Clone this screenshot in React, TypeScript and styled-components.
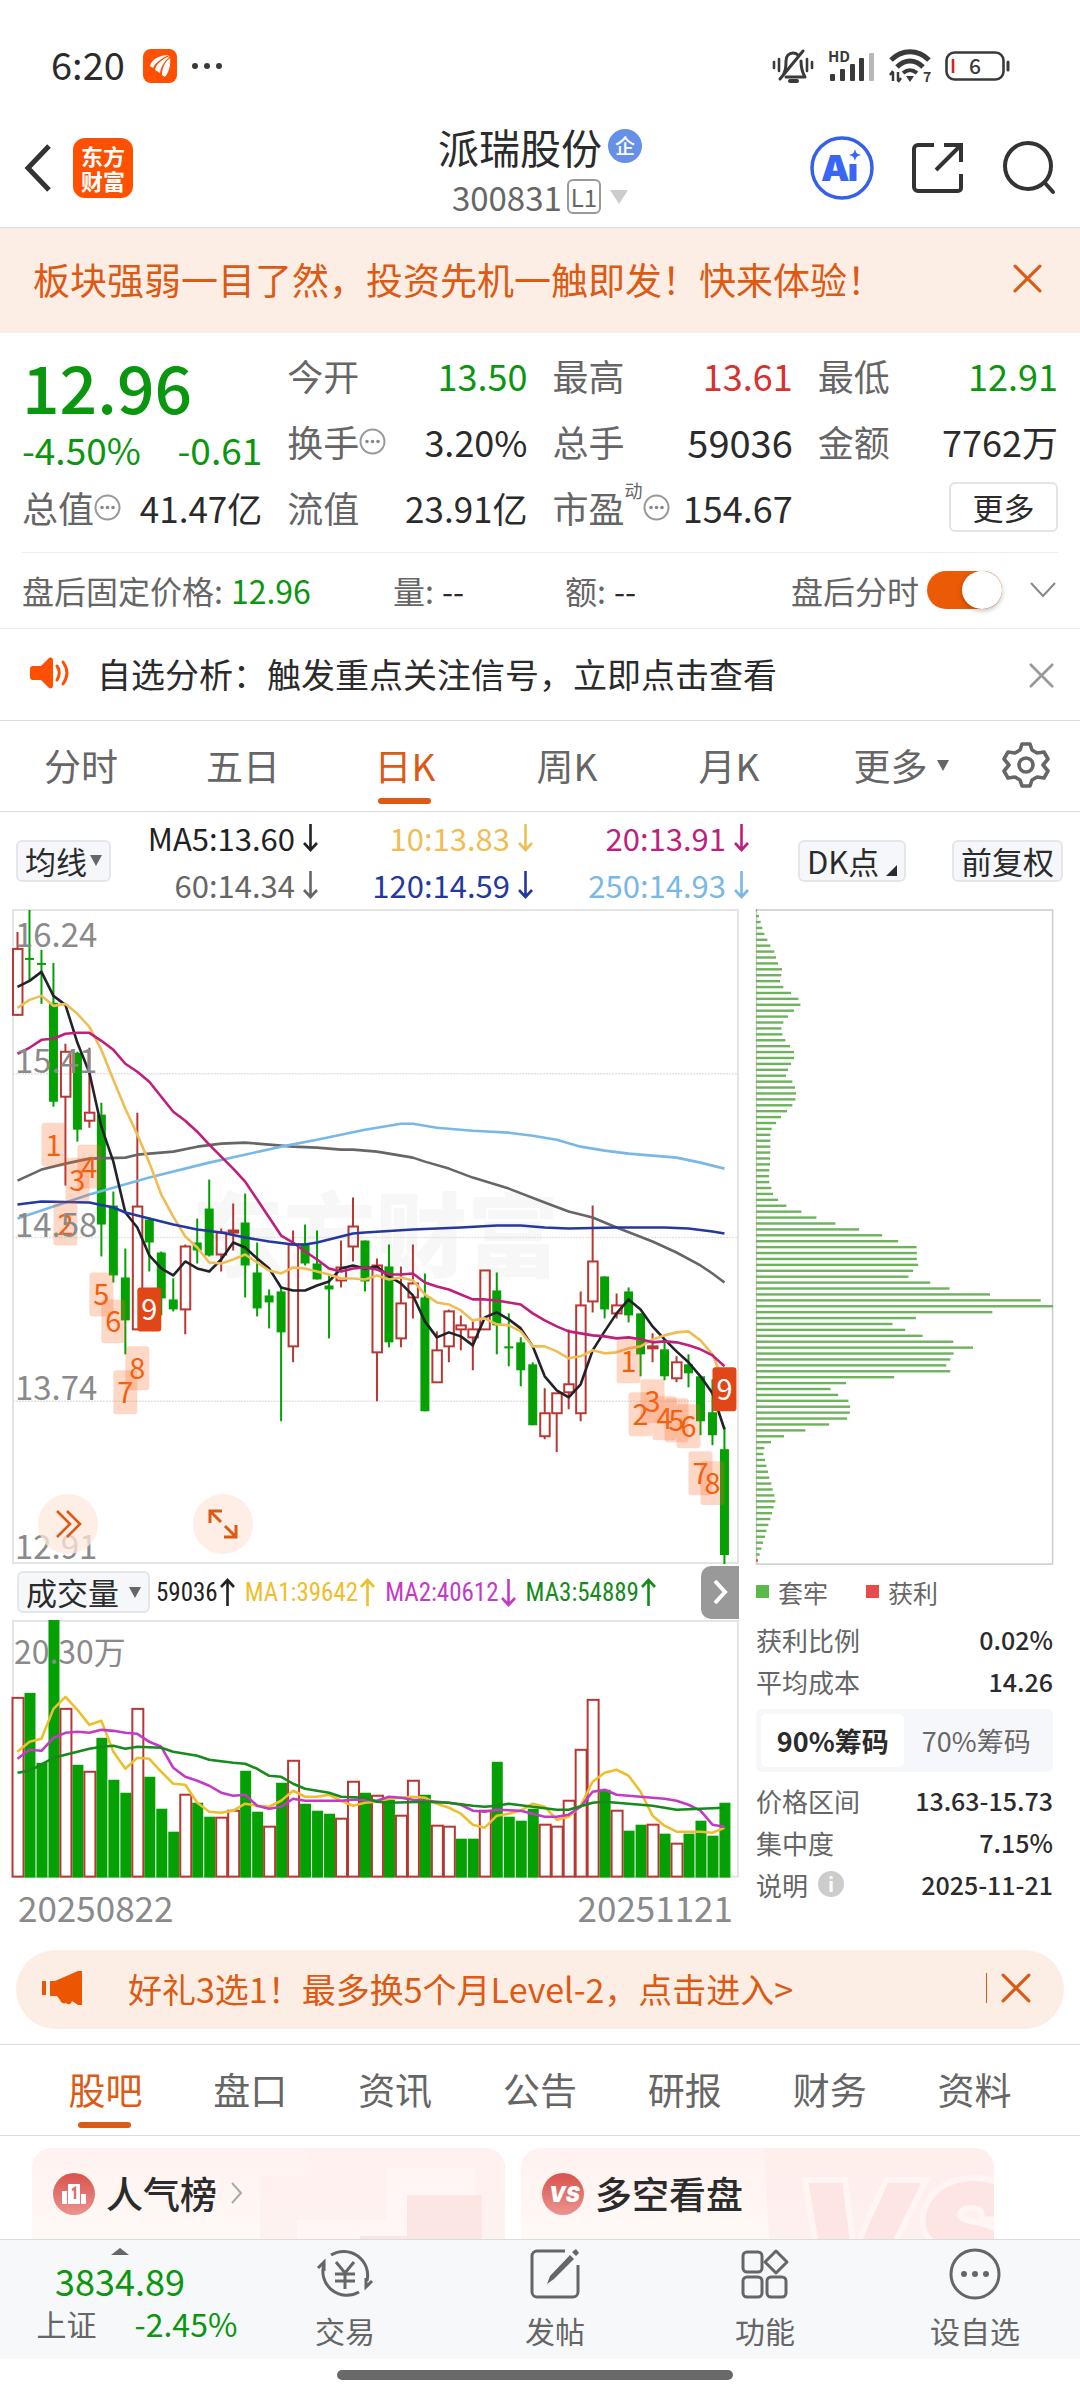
import React from "react";
import styled, { createGlobalStyle, css } from "styled-components";

/* ---------- theme ---------- */

const color = {
  text: "#2b2b2b",
  muted: "#666666",
  faint: "#8a8a8a",
  line: "#dcdcdc",
  softLine: "#ececec",
  orange: "#dc5a14",
  brand: "#ff4f00",
  green: "#0b960f",
  red: "#d8312f",
  candleUp: "#b93733",
  candleDown: "#04a004",
  peach: "#fdeee5",
  panel: "#f6f7fa",
};

const GlobalStyle = createGlobalStyle`
  * { box-sizing: border-box; }
  body {
    margin: 0;
    background: #fff;
    color: ${color.text};
    font-family: "Noto Sans CJK SC", "Noto Sans", sans-serif;
  }
  button {
    font: inherit;
    color: inherit;
    background: none;
    border: 0;
    margin: 0;
    padding: 0;
    cursor: pointer;
  }
  a { color: inherit; text-decoration: none; }
  svg { display: block; flex: none; overflow: visible; }
`;

/* ---------- page shell ---------- */

const Page = styled.div`
  display: flex;
  flex-direction: column;
  height: 100vh;
  overflow: hidden;
`;

const Main = styled.main`
  flex: 1;
  min-height: 0;
  overflow: hidden;
`;

/* ---------- status bar ---------- */

const StatusBar = styled.div`
  display: flex;
  align-items: center;
  justify-content: space-between;
  height: 88px;
  padding: 44px 70px 0 51px;
`;

const StatusGroup = styled.div`
  display: flex;
  align-items: center;
  gap: 14px;
`;

const Clock = styled.span`
  font-size: 38px;
  line-height: 40px;
  margin-right: 4px;
  padding-bottom: 4px;
`;

/* ---------- title bar ---------- */

const TitleBar = styled.header`
  display: grid;
  grid-template-columns: 1fr auto 1fr;
  align-items: center;
  height: 140px;
  padding: 20px 24px 0;
  border-bottom: 1px solid ${color.line};
`;

const TitleSide = styled.div<{ $end?: boolean }>`
  display: flex;
  align-items: center;
  gap: ${(p) => (p.$end ? 38 : 22)}px;
  justify-content: ${(p) => (p.$end ? "flex-end" : "flex-start")};
`;

const AppLogo = styled.span`
  display: grid;
  place-content: center;
  width: 60px;
  height: 60px;
  border-radius: 12px;
  background: ${color.brand};
  color: #fff;
  font-size: 22px;
  line-height: 25px;
  font-weight: 700;
`;

const TitleText = styled.div`
  display: flex;
  flex-direction: column;
  align-items: center;
  padding-top: 4px;
`;

const StockName = styled.h1`
  display: flex;
  align-items: center;
  gap: 6px;
  margin: 0;
  font-size: 41px;
  line-height: 54px;
  font-weight: 400;
`;

const CompanyBadge = styled.span`
  display: grid;
  place-content: center;
  width: 34px;
  height: 34px;
  border-radius: 50%;
  background: #6690e8;
  color: #fff;
  font-size: 20px;
  line-height: 24px;
  font-weight: 500;
`;

const StockCode = styled.button`
  display: flex;
  align-items: center;
  gap: 5px;
  font-size: 33px;
  line-height: 48px;
  color: ${color.muted};
`;

const LevelTag = styled.span`
  margin-right: 4px;
  border: 2px solid #999;
  border-radius: 6px;
  padding: 0 2px;
  font-size: 24px;
  line-height: 31px;
`;

const Caret = styled.span<{ $size?: number; $color?: string }>`
  width: 0;
  height: 0;
  border: ${(p) => p.$size ?? 6}px solid transparent;
  border-bottom-width: 0;
  border-top: ${(p) => (p.$size ?? 6) + 5}px solid ${(p) => p.$color ?? color.muted};
`;

/* ---------- banner and quote ---------- */

const Banner = styled.div`
  display: flex;
  align-items: center;
  justify-content: space-between;
  height: 105px;
  padding: 0 38px 4px 33px;
  background: ${color.peach};
  color: ${color.orange};
  font-size: 37px;
`;

const QuotePanel = styled.section`
  display: grid;
  grid-template-columns: repeat(4, minmax(0, 1fr));
  grid-auto-rows: 66px;
  column-gap: 25px;
  margin: 0 22px;
  padding: 9px 0 12px;
  border-bottom: 1px solid ${color.softLine};
`;

const PriceBlock = styled.div`
  grid-row: span 2;
  padding-top: 3px;
  color: ${color.green};
`;

const LastPrice = styled.div`
  font-size: 66px;
  line-height: 80px;
  font-weight: 500;
`;

const Changes = styled.div`
  display: flex;
  justify-content: space-between;
  font-size: 37px;
  line-height: 49px;
`;

const Metric = styled.div`
  display: flex;
  align-items: center;
  justify-content: space-between;
  white-space: nowrap;
`;

const MetricLabel = styled.span`
  display: flex;
  align-items: center;
  font-size: 36px;
  color: ${color.muted};
`;

const MetricValue = styled.span<{ $tone?: "up" | "down"; $size?: number }>`
  font-size: ${(p) => p.$size ?? 36}px;
  color: ${(p) => (p.$tone === "up" ? color.red : p.$tone === "down" ? color.green : color.text)};
`;

const SmallSup = styled.sup`
  align-self: flex-start;
  font-size: 18px;
  line-height: 18px;
`;

const MoreButton = styled.button`
  justify-self: end;
  align-self: center;
  width: 109px;
  height: 50px;
  border: 2px solid #e4e4e4;
  border-radius: 6px;
  font-size: 31px;
  line-height: 44px;
`;

const AfterHours = styled.section`
  display: flex;
  align-items: center;
  height: 76px;
  padding: 0 24px 2px 22px;
  border-bottom: 1px solid ${color.softLine};
  font-size: 32px;
  color: ${color.muted};
`;

const AfterItem = styled.span<{ $width: number }>`
  flex: 0 1 ${(p) => p.$width}px;
  white-space: nowrap;
`;

const AfterValue = styled.b<{ $green?: boolean }>`
  margin-left: 8px;
  font-weight: 400;
  color: ${(p) => (p.$green ? color.green : color.text)};
`;

const SwitchLabel = styled.label`
  display: flex;
  align-items: center;
  gap: 8px;
  margin-left: auto;
`;

const Switch = styled.input`
  appearance: none;
  display: flex;
  align-items: center;
  justify-content: flex-end;
  width: 75px;
  height: 38px;
  margin: 0 28px 0 0;
  border-radius: 19px;
  background: #eb5a05;
  &::before {
    content: "";
    width: 40px;
    height: 38px;
    border-radius: 50%;
    background: #fff;
    box-shadow: 0 2px 5px rgba(0, 0, 0, 0.25);
  }
`;

const Notice = styled.section`
  display: flex;
  align-items: center;
  gap: 28px;
  height: 92px;
  padding: 0 26px 3px 29px;
  border-bottom: 1px solid ${color.line};
  font-size: 34px;
`;

const Push = styled.span`
  margin-left: auto;
`;

/* ---------- tabs ---------- */

const Tabs = styled.nav<{ $columns: string; $inset: number }>`
  display: grid;
  grid-template-columns: ${(p) => p.$columns};
  height: 91px;
  padding: 0 ${(p) => p.$inset}px;
  border-bottom: 1px solid ${color.line};
`;

const Tab = styled.button<{ $active?: boolean }>`
  position: relative;
  display: flex;
  align-items: center;
  justify-content: center;
  gap: 9px;
  padding-bottom: 2px;
  font-size: 37px;
  color: ${(p) => (p.$active ? color.orange : color.muted)};
  ${(p) =>
    p.$active &&
    css`
      &::after {
        content: "";
        position: absolute;
        left: calc(50% - 27px);
        bottom: 7px;
        width: 53px;
        height: 6px;
        border-radius: 3px;
        background: ${color.orange};
      }
    `}
`;

/* ---------- indicators ---------- */

const IndicatorBar = styled.section`
  display: flex;
  align-items: center;
  height: 97px;
  padding: 0 17px 0 16px;
`;

const Chip = styled.button<{ $gap?: number }>`
  position: relative;
  display: flex;
  align-items: center;
  gap: ${(p) => p.$gap ?? 3}px;
  height: 42px;
  padding: 0 7px;
  border: 2px solid #e4e6ea;
  border-radius: 6px;
  background: ${color.panel};
  font-size: 31px;
  line-height: 36px;
  white-space: nowrap;
`;

const Corner = styled.i`
  align-self: flex-end;
  margin: 0 0 4px 4px;
  border-left: 11px solid transparent;
  border-bottom: 11px solid ${color.text};
`;

const Averages = styled.div`
  flex: 1;
  display: grid;
  grid-template-columns: 207fr 215fr 216fr;
  max-width: 638px;
`;

const Average = styled.span<{ $color: string }>`
  display: flex;
  align-items: center;
  justify-content: flex-end;
  gap: 8px;
  font-size: 31px;
  line-height: 47px;
  color: ${(p) => p.$color};
`;

const ChipGroup = styled.div`
  display: flex;
  justify-content: space-between;
  gap: 20px;
  flex: 0 0 265px;
  margin-left: auto;
`;

/* ---------- charts ---------- */

const ChartArea = styled.section`
  display: grid;
  grid-template-columns: minmax(0, 13fr) minmax(0, 6fr);
`;

const ChartColumn = styled.div`
  padding-left: 12px;
`;

const Stage = styled.div`
  position: relative;
`;

const Plot = styled.svg`
  width: 100%;
  height: auto;
`;

const FloatButton = styled.button<{ $left: string }>`
  position: absolute;
  left: ${(p) => p.$left};
  bottom: 10px;
  display: grid;
  place-content: center;
  width: 60px;
  height: 60px;
  border-radius: 50%;
  background: rgba(253, 232, 220, 0.75);
`;

const VolumeHead = styled.div`
  display: flex;
  align-items: center;
  gap: 6px;
  height: 56px;
  padding-left: 5px;
`;

const VolumeFigures = styled.div`
  display: flex;
  gap: 10px;
  font-family: "Liberation Sans Narrow", "Roboto Condensed", "Noto Sans CJK SC", sans-serif;
  font-size: 25px;
`;

const Figure = styled.span<{ $color: string }>`
  display: flex;
  align-items: center;
  gap: 2px;
  color: ${(p) => p.$color};
`;

const SideToggle = styled.button`
  display: grid;
  place-content: center;
  width: 38px;
  height: 53px;
  margin-left: auto;
  border-radius: 10px 0 0 10px;
  background: #999;
`;

const Dates = styled.div`
  display: flex;
  justify-content: space-between;
  padding: 0 6px;
  font-size: 35px;
  line-height: 58px;
  color: ${color.faint};
`;

const ChipColumn = styled.div`
  padding: 0 27px 0 17px;
`;

const Legend = styled.div`
  display: flex;
  gap: 38px;
  height: 53px;
  align-items: center;
  color: ${color.muted};
  font-size: 25px;
`;

const LegendItem = styled.span<{ $color: string }>`
  display: flex;
  align-items: center;
  gap: 9px;
  &::before {
    content: "";
    width: 13px;
    height: 13px;
    background: ${(p) => p.$color};
  }
`;

const ChipRow = styled.div`
  display: flex;
  align-items: center;
  justify-content: space-between;
  height: 42px;
  font-size: 26px;
  color: ${color.muted};
`;

const ChipLabel = styled.span`
  display: flex;
  align-items: center;
  gap: 10px;
`;

const ChipValue = styled.b`
  font-size: 25px;
  font-weight: 500;
  color: ${color.text};
`;

const InfoDot = styled.span`
  display: grid;
  place-content: center;
  width: 26px;
  height: 26px;
  border-radius: 50%;
  background: #ccc;
  color: #fff;
  font-size: 20px;
  line-height: 24px;
  font-weight: 700;
`;

const Segmented = styled.div`
  display: grid;
  grid-template-columns: 1fr 1fr;
  height: 63px;
  margin: 7px 0;
  padding: 5px;
  border-radius: 6px;
  background: ${color.panel};
`;

const Segment = styled.button<{ $active?: boolean }>`
  border-radius: 5px;
  font-size: 27px;
  white-space: nowrap;
  background: ${(p) => (p.$active ? "#fff" : "transparent")};
  color: ${(p) => (p.$active ? color.text : color.muted)};
  font-weight: ${(p) => (p.$active ? 700 : 400)};
`;

/* ---------- promo ---------- */

const Promo = styled.aside`
  display: flex;
  align-items: center;
  height: 79px;
  margin: 14px 16px 15px;
  padding: 0 33px 2px 26px;
  border-radius: 40px;
  background: ${color.peach};
  color: ${color.orange};
  font-size: 34px;
`;

const PromoLink = styled.a`
  margin-left: 46px;
`;

const PromoClose = styled.button`
  margin-left: auto;
  padding-left: 14px;
  border-left: 1px solid ${color.orange};
`;

const Rule = styled.hr`
  margin: 0;
  border: 0;
  border-top: 1px solid ${color.line};
`;

/* ---------- cards ---------- */

const Cards = styled.section`
  display: grid;
  grid-template-columns: 1fr 1fr;
  gap: 16px;
  padding: 12px 86px 0 32px;
`;

const Card = styled.a`
  position: relative;
  display: flex;
  align-items: flex-start;
  gap: 11px;
  height: 220px;
  padding: 25px 21px;
  border-radius: 20px;
  overflow: hidden;
  background: linear-gradient(#fff2f0, #fffaf7 100px);
  font-size: 37px;
  line-height: 40px;
  font-weight: 500;
`;

const CardArt = styled.svg`
  position: absolute;
  top: 0;
  right: 0;
`;

const CardTitle = styled.span`
  display: flex;
  align-items: center;
  gap: 14px;
`;

/* ---------- bottom navigation ---------- */

const BottomBar = styled.footer`
  position: relative;
  display: grid;
  grid-template-columns: 8fr 7fr 7fr 7fr 7fr;
  height: 120px;
  border-top: 1px solid ${color.line};
  background: #f6f8fa;
`;

const IndexButton = styled.button`
  display: flex;
  flex-direction: column;
  align-items: center;
  padding-top: 8px;
  color: ${color.green};
`;

const UpCaret = styled.i`
  border: 9px solid transparent;
  border-top: 0;
  border-bottom: 7px solid ${color.muted};
`;

const IndexPrice = styled.span`
  font-size: 36px;
  line-height: 50px;
`;

const IndexRow = styled.span`
  display: flex;
  align-items: center;
  gap: 38px;
  padding-left: 34px;
  font-size: 32px;
  line-height: 36px;
`;

const IndexName = styled.span`
  color: ${color.muted};
  font-size: 30px;
`;

const NavButton = styled.button`
  display: flex;
  flex-direction: column;
  align-items: center;
  gap: 8px;
  padding-top: 8px;
  color: ${color.muted};
  font-size: 30px;
  line-height: 44px;
`;

const HomeArea = styled.div`
  display: flex;
  justify-content: center;
  height: 41px;
  padding: 11px 10px 0 0;
`;

const HomeIndicator = styled.span`
  width: 37%;
  height: 10px;
  border-radius: 5px;
  background: #696969;
`;

/* ---------- icons ---------- */

const Cross = ({ size, stroke, width = 3 }: { size: number; stroke: string; width?: number }) => (
  <svg width={size} height={size} viewBox="0 0 28 28" fill="none" stroke={stroke} strokeWidth={width} strokeLinecap="round">
    <path d="M2 2 26 26M26 2 2 26" />
  </svg>
);

const DotsInfo = () => (
  <svg width="27" height="27" viewBox="0 0 27 27" fill="none" stroke="#999" strokeWidth="2">
    <circle cx="13.5" cy="13.5" r="12" />
    <g fill="#888" stroke="none">
      <circle cx="8" cy="13.5" r="1.8" />
      <circle cx="13.5" cy="13.5" r="1.8" />
      <circle cx="19" cy="13.5" r="1.8" />
    </g>
  </svg>
);

const Trend = ({ up }: { up?: boolean }) => (
  <svg width="15" height="29" viewBox="0 0 15 29" fill="none" stroke="currentColor" strokeWidth="2.6">
    <path d={up ? "M7.500 28V2M1 9 7.500 2 14 9" : "M7.500 1V27M1 20 7.500 27 14 20"} />
  </svg>
);

const BellOff = () => (
  <svg width="42" height="36" viewBox="0 0 42 36" fill="none" stroke="#3a3a3a" strokeWidth="3" strokeLinecap="round" strokeLinejoin="round">
    <path d="M12 25c2-3 2-7 2-12 0-5 3-8 7-8 2 0 4 1 5 2M29 13c0 7 1 11 4 16H14" />
    <path d="M31 3 8 31" />
    <path d="M18 33h7" strokeWidth="4" />
    <path d="M7 11v12M2 14v6M35 11v12M40 14v6" strokeWidth="2.6" />
  </svg>
);

const Signal = () => (
  <svg width="47" height="34" viewBox="0 0 47 34" fill="#3a3a3a">
    <text x="0" y="13" fontSize="15" fontWeight="700">HD</text>
    <rect x="2" y="25" width="5" height="7" rx="1" />
    <rect x="12" y="20" width="5" height="12" rx="1" />
    <rect x="22" y="15" width="5" height="17" rx="1" />
    <rect x="31" y="9" width="5" height="23" rx="1" />
    <rect x="41" y="4" width="5" height="28" rx="1" fill="#b8b8b8" />
  </svg>
);

const Wifi = () => (
  <svg width="42" height="34" viewBox="0 0 42 34" fill="none" stroke="#3a3a3a" strokeWidth="5">
    <path d="M2 11c11-11 27-11 38 0" />
    <path d="M8 18c8-8 18-8 26 0" />
    <path d="M14 24c5-4 9-4 14 0" strokeWidth="4" />
    <path d="M17 27h8l-4 6z" fill="#3a3a3a" stroke="none" />
    <path d="M4 32V23M9 23v9" strokeWidth="2.500" />
    <path d="m1 26 3-4M12 29l-3 4" strokeWidth="2.500" />
    <text x="34" y="33" fontSize="14" fontWeight="700" fill="#3a3a3a" stroke="none">7</text>
  </svg>
);

const Battery = () => (
  <svg width="65" height="30" viewBox="0 0 65 30" fill="none" stroke="#3a3a3a" strokeWidth="2.600">
    <rect x="1.500" y="1.500" width="57" height="27" rx="8" />
    <path d="M63 11v8" strokeWidth="3" strokeLinecap="round" />
    <path d="M8 8v14" stroke="#e02020" strokeWidth="2.600" />
    <text x="24" y="23" fontSize="21" fontWeight="500" fill="#3a3a3a" stroke="none">6</text>
  </svg>
);

const AppGlyph = () => (
  <svg width="34" height="34" viewBox="0 0 34 34">
    <rect width="34" height="34" rx="8" fill={color.brand} />
    <path d="M7 17C9 10 16 6 26 6 19 9 12 14 10 19zM12 21c1-6 7-11 15-14-5 5-9 10-10 17zM19 26c0-7 3-13 8-17 1 7-1 14-5 19z" fill="#fff" />
  </svg>
);

const MoreDots = () => (
  <svg width="32" height="8" viewBox="0 0 32 8" fill="#3a3a3a">
    <circle cx="4" cy="4" r="3" />
    <circle cx="16" cy="4" r="3" />
    <circle cx="28" cy="4" r="3" />
  </svg>
);

const Back = () => (
  <svg width="27" height="48" viewBox="0 0 27 48" fill="none" stroke="#333" strokeWidth="5">
    <path d="M25 2 4 24l21 22" />
  </svg>
);

const AiIcon = () => (
  <svg width="64" height="64" viewBox="0 0 64 64" fill="none">
    <circle cx="32" cy="32" r="30" stroke="#3461e8" strokeWidth="3.500" />
    <text x="11" y="45" fontSize="36" fontWeight="900" fill="#3a66f5" fontFamily="Inter, sans-serif">A</text>
    <path d="M43 28v17" stroke="#3a66f5" strokeWidth="7" />
    <path d="M45 13c1 4 2 5 6 6-4 1-5 2-6 6-1-4-2-5-6-6 4-1 5-2 6-6z" fill="#3a66f5" />
  </svg>
);

const Share = () => (
  <svg width="52" height="52" viewBox="0 0 52 52" fill="none" stroke="#333" strokeWidth="4">
    <path d="M22 3H6a4 4 0 0 0-4 4v38a4 4 0 0 0 4 4h40a3 3 0 0 0 3-3V32" />
    <path d="M32 3h17v17M49 3 24 28" />
  </svg>
);

const Search = () => (
  <svg width="54" height="54" viewBox="0 0 54 54" fill="none" stroke="#333" strokeWidth="4" strokeLinecap="round">
    <circle cx="26" cy="25" r="23" />
    <path d="m43 42 8 9" />
  </svg>
);

const Speaker = () => (
  <svg width="40" height="32" viewBox="0 0 40 32" fill={color.brand}>
    <path d="M4 9h8L20 1c2-1 4 0 4 2v26c0 2-2 3-4 2l-8-8H4c-2 0-3-1-3-3v-8c0-2 1-3 3-3z" />
    <path d="M28 9c3 4 3 10 0 14M34 5c5 7 5 15 0 22" fill="none" stroke={color.brand} strokeWidth="3" strokeLinecap="round" />
  </svg>
);

const Gear = () => (
  <svg width="48" height="48" viewBox="0 0 48 48" fill="none" stroke={color.muted} strokeWidth="3.600" strokeLinejoin="round">
    <path d="M20 3h8l2 6 5 3 7-1 4 7-5 6 5 6-4 7-7-1-5 3-2 6h-8l-2-6-5-3-7 1-4-7 5-6-5-6 4-7 7 1 5-3z" />
    <circle cx="24" cy="24" r="7" />
  </svg>
);

const Chevron = ({ w, h, d, stroke, width }: { w: number; h: number; d: string; stroke: string; width: number }) => (
  <svg width={w} height={h} viewBox={`0 0 ${w} ${h}`} fill="none" stroke={stroke} strokeWidth={width}>
    <path d={d} />
  </svg>
);

const Megaphone = () => (
  <svg width="40" height="36" viewBox="0 0 40 36" fill="#ec5600">
    <path d="M0 11h4v14H0zM8 11h5L36 1h4v34h-4l-6-4c-1 4-4 4-6 2-2 1-5 0-6-3l-3-4H8z" />
  </svg>
);

const RankIcon = () => (
  <svg width="42" height="42" viewBox="0 0 42 42">
    <defs>
      <linearGradient id="badge" x2="0" y2="1">
        <stop stopColor="#d9524c" />
        <stop offset="1" stopColor="#eb9490" />
      </linearGradient>
    </defs>
    <circle cx="21" cy="21" r="21" fill="url(#badge)" />
    <path d="M9 18h5v13H9zM28 21h5v10h-5zM15 11h12v20H15z" fill="#fff" />
    <path d="m19 17 3-2v11" fill="none" stroke="#e0706a" strokeWidth="2.500" />
  </svg>
);

const VersusIcon = () => (
  <svg width="42" height="42" viewBox="0 0 42 42">
    <circle cx="21" cy="21" r="21" fill="url(#badge)" />
    <text x="7" y="29" fontSize="21" fontWeight="900" fontStyle="italic" fill="#fff" fontFamily="Inter, sans-serif">VS</text>
  </svg>
);

const TradeIcon = () => (
  <svg width="58" height="52" viewBox="0 0 58 52" fill="none" stroke={color.muted} strokeWidth="3">
    <path d="M15 7a24 24 0 0 1 36 26M43 44A24 24 0 0 1 8 16" />
    <path d="M2 20l6-6v9M56 33l-6 6v-9" />
    <path d="m20 14 9 11 9-11M29 25v16M19 26h20M19 33h20" />
  </svg>
);

const PostIcon = () => (
  <svg width="52" height="52" viewBox="0 0 52 52" fill="none" stroke={color.muted} strokeWidth="3">
    <path d="M36 3H8a5 5 0 0 0-5 5v36a5 5 0 0 0 5 5h36a5 5 0 0 0 5-5V17" />
    <path d="m18 36 3-8L41 7l4 4-20 20zM43 4l4-3 3 4-3 3z" fill={color.muted} stroke="none" />
  </svg>
);

const FeatureIcon = () => (
  <svg width="50" height="52" viewBox="0 0 50 52" fill="none" stroke={color.muted} strokeWidth="3" strokeLinejoin="round">
    <rect x="3" y="4" width="19" height="20" rx="4" />
    <path d="m36 3 11 11-11 11-11-11z" />
    <rect x="3" y="29" width="19" height="20" rx="4" />
    <rect x="27" y="29" width="19" height="20" rx="4" />
  </svg>
);

const WatchIcon = () => (
  <svg width="52" height="52" viewBox="0 0 52 52" fill="none" stroke={color.muted} strokeWidth="3">
    <circle cx="26" cy="26" r="24" />
    <g fill={color.muted} stroke="none">
      <circle cx="15" cy="26" r="3" />
      <circle cx="26" cy="26" r="3" />
      <circle cx="37" cy="26" r="3" />
    </g>
  </svg>
);

/* ---------- chart data ---------- */

const STEP = 12;
const cx = (i: number) => 5.5 + i * STEP;

// side, high, body top, body bottom, low
type Candle = ["u" | "d", number, number, number, number];
const candles: Candle[] = [
  ["u", 23, 40, 106, 107], ["d", 1, 49, 50, 71], ["d", 41, 54, 55, 95], ["d", 54, 94, 193, 198],
  ["u", 135, 143, 188, 277], ["d", 143, 144, 221, 233], ["u", 139, 204, 212, 219], ["d", 194, 206, 316, 348],
  ["d", 283, 297, 367, 374], ["d", 340, 369, 412, 446], ["u", 204, 298, 421, 421], ["d", 309, 311, 334, 363],
  ["d", 343, 344, 390, 407], ["d", 370, 391, 401, 403], ["u", 336, 338, 401, 426], ["d", 310, 334, 342, 355],
  ["d", 271, 300, 347, 348], ["u", 320, 324, 346, 363], ["u", 295, 322, 324, 342], ["d", 285, 314, 357, 389],
  ["d", 334, 364, 400, 408], ["d", 381, 387, 394, 420], ["d", 378, 383, 424, 513], ["u", 322, 336, 438, 454],
  ["d", 316, 335, 355, 357], ["d", 322, 355, 371, 371], ["d", 367, 377, 381, 430], ["u", 332, 359, 372, 379],
  ["u", 289, 318, 338, 353], ["d", 332, 332, 373, 383], ["u", 350, 357, 444, 493], ["d", 336, 358, 434, 439],
  ["u", 358, 395, 430, 439], ["u", 336, 375, 389, 410], ["d", 365, 389, 503, 503], ["u", 423, 442, 474, 474],
  ["u", 401, 403, 438, 454], ["u", 407, 417, 421, 442], ["u", 413, 421, 429, 462], ["u", 362, 362, 421, 421],
  ["d", 364, 382, 417, 446], ["d", 405, 438, 439, 458], ["d", 429, 434, 462, 478], ["d", 454, 456, 517, 517],
  ["u", 480, 505, 528, 531], ["u", 485, 485, 505, 544], ["u", 421, 476, 484, 501], ["u", 383, 397, 505, 513],
  ["u", 297, 353, 393, 404], ["d", 368, 368, 401, 410], ["u", 385, 397, 405, 410], ["d", 379, 383, 407, 414],
  ["d", 405, 405, 446, 468], ["u", 425, 438, 440, 454], ["d", 431, 441, 468, 472], ["u", 448, 454, 470, 474],
  ["d", 446, 456, 465, 479], ["d", 468, 468, 513, 527], ["d", 471, 504, 527, 537], ["d", 519, 541, 647, 656],
];

const dense = (values: number[]): [number, number][] => values.map((v, i) => [i, v]);

const priceLines: { stroke: string; points: [number, number][] }[] = [
  {
    stroke: "#666666",
    points: [[0, 272], [2, 261], [4, 255], [6, 250], [9, 249], [10, 246], [11, 245], [13, 243], [15, 238], [17, 235], [19, 234], [21, 236], [23, 238], [25, 239], [27, 241], [28, 241], [30, 243], [33, 249], [34, 253], [36, 260], [38, 269], [41, 280], [44, 294], [46, 303], [48, 309], [50, 319], [53, 333], [55, 344], [57, 357], [58, 365], [59, 374]],
  },
  {
    stroke: "#78b8e6",
    points: [[0, 310], [4, 294], [6, 286], [11, 269], [16, 254], [22, 238], [25, 231], [29, 221], [31, 217], [32, 215], [33, 215], [35, 219], [38, 222], [41, 224], [43, 227], [45, 231], [47, 238], [49, 242], [51, 245], [53, 247], [55, 249], [57, 254], [59, 260]],
  },
  {
    stroke: "#22222a",
    points: dense([78, 72, 63, 87, 96, 134, 164, 218, 253, 304, 319, 347, 360, 367, 353, 360, 363, 351, 334, 339, 350, 360, 379, 382, 382, 377, 373, 360, 357, 360, 358, 368, 375, 387, 413, 429, 424, 428, 437, 409, 404, 411, 420, 438, 468, 482, 489, 476, 442, 423, 405, 391, 401, 418, 431, 443, 454, 468, 485, 521]),
  },
  {
    stroke: "#f0bd55",
    points: dense([99, 91, 87, 97, 95, 105, 118, 141, 171, 200, 226, 254, 286, 308, 328, 339, 354, 355, 351, 346, 354, 362, 365, 359, 360, 363, 366, 370, 370, 371, 367, 371, 369, 372, 386, 394, 396, 402, 412, 410, 416, 417, 423, 438, 438, 443, 450, 448, 442, 445, 444, 440, 438, 431, 427, 424, 423, 432, 446, 476]),
  },
  {
    stroke: "#bf1f7c",
    points: dense([145, 139, 131, 130, 125, 124, 124, 132, 141, 155, 163, 173, 188, 203, 212, 223, 236, 248, 260, 273, 291, 309, 327, 334, 343, 351, 360, 363, 360, 359, 361, 366, 366, 365, 374, 378, 381, 386, 391, 391, 392, 394, 396, 405, 412, 418, 423, 425, 427, 428, 430, 429, 431, 434, 433, 434, 437, 441, 447, 458]),
  },
  {
    stroke: "#2338a0",
    points: [[0, 296], [2, 293], [6, 294], [8, 299], [9, 304], [11, 310], [13, 316], [15, 321], [17, 324], [19, 329], [21, 333], [23, 336], [24, 336], [25, 334], [27, 328], [28, 325], [29, 324], [33, 321], [37, 319], [40, 317], [42, 317], [44, 319], [46, 320], [50, 319], [54, 319], [56, 320], [58, 323], [59, 325]],
  },
];

// candle index, badge top, count
const signals: [number, number, number][] = [
  [3, 214, 1], [4, 293, 2], [5, 249, 3], [6, 236, 4], [7, 364, 5], [8, 391, 6], [9, 462, 7], [10, 438, 8], [11, 379, 9],
  [51, 431, 1], [52, 484, 2], [53, 471, 3], [54, 488, 4], [55, 490, 5], [56, 496, 6], [57, 543, 7], [58, 553, 8], [59, 459, 9],
];

const priceLabels: [string, number][] = [["16.24", 38], ["15.41", 164], ["14.58", 328], ["13.74", 492], ["12.91", 651]];

const volumes: number[] = [
  78, 73, 143, 0, 89, 145, 152, 118, 160, 173, 89, 157, 189, 212, 175, 183, 197, 198, 191, 151,
  192, 207, 163, 141, 184, 191, 194, 199, 162, 173, 176, 180, 196, 161, 175, 206, 207, 219, 219, 191,
  142, 197, 201, 189, 205, 207, 181, 130, 80, 170, 191, 211, 205, 205, 214, 224, 214, 201, 216, 183,
];
const volumeUp = new Set([0, 4, 6, 10, 14, 17, 18, 21, 23, 27, 28, 30, 32, 33, 35, 36, 39, 44, 45, 46, 47, 48, 50, 53, 55]);

const volumeLines: { stroke: string; points: [number, number][] }[] = [
  {
    stroke: "#eebf2c",
    points: dense([132, 122, 119, 89, 77, 90, 105, 101, 132, 149, 138, 139, 152, 164, 165, 183, 192, 193, 191, 184, 186, 187, 181, 171, 177, 177, 175, 181, 186, 183, 182, 179, 178, 177, 178, 184, 188, 194, 205, 208, 196, 194, 191, 184, 187, 200, 197, 186, 162, 153, 150, 156, 172, 196, 206, 212, 212, 212, 213, 208]),
  },
  {
    stroke: "#c33ac6",
    points: [...dense([139, 130, 131, 118, 113, 112, 113, 110, 111, 113, 114, 122, 127, 148, 157, 161, 166, 173, 176, 175, 186, 189, 187, 179, 181, 181, 181, 181, 180, 180, 181, 177, 178, 180, 181]), [36, 183], [37, 185], [38, 191], [39, 192], [40, 190], [42, 191], [43, 194], [44, 197], [45, 197], [46, 195], [47, 187], [48, 172], [49, 170], [50, 175], [52, 177], [54, 179], [55, 181], [56, 185], [57, 191], [58, 205], [59, 207]],
  },
  {
    stroke: "#168a1c",
    points: [[0, 153], [1, 151], [3, 138], [4, 135], [6, 129], [7, 127], [8, 126], [9, 129], [10, 127], [12, 128], [13, 132], [15, 136], [16, 140], [18, 143], [19, 144], [20, 149], [21, 156], [22, 157], [23, 164], [24, 169], [26, 173], [27, 177], [29, 178], [30, 182], [31, 183], [34, 182], [36, 183], [38, 186], [39, 187], [40, 186], [41, 184], [43, 187], [45, 190], [46, 190], [48, 183], [49, 182], [51, 184], [53, 186], [55, 190], [57, 189], [59, 188]],
  },
];

const chipBars: number[] = [
  3, 9, 14, 19, 25, 34, 43, 55, 60, 66, 78, 76, 72, 82, 105, 127, 133, 114, 96, 82, 76, 79, 88, 102, 114, 114, 105, 96,
  90, 109, 117, 120, 118, 109, 93, 75, 60, 47, 43, 43, 43, 43, 42, 42, 40, 39, 40, 46, 51, 66, 91, 136, 181, 238, 309,
  378, 426, 481, 482, 482, 486, 471, 457, 522, 580, 701, 853, 890, 708, 479, 409, 447, 499, 591, 650, 592, 582, 570,
  582, 414, 270, 223, 246, 277, 282, 281, 273, 219, 148, 84, 45, 25, 22, 27, 31, 36, 40, 46, 50, 55, 58, 53, 48, 43,
  37, 31, 27, 21, 16, 11, 6,
];
const chipMax = Math.max(...chipBars);

const toPoints = (points: [number, number][]) => points.map(([i, y]) => `${cx(i)},${y}`).join(" ");

const CandleMark = ({ index, data }: { index: number; data: Candle }) => {
  const [side, high, top, bottom, low] = data;
  const x = cx(index);
  if (side === "d") {
    return (
      <g fill={color.candleDown}>
        <rect x={x - 1} y={high} width="2" height={low - high} />
        <rect x={x - 4.5} y={top} width="9" height={Math.max(2, bottom - top)} />
      </g>
    );
  }
  return (
    <g stroke={color.candleUp} strokeWidth="2" fill="none">
      <path d={`M${x} ${high}V${top}M${x} ${bottom}V${low}`} />
      <rect x={x - 4.5} y={top} width="9.500" height={Math.max(2, bottom - top)} />
    </g>
  );
};

const CandleChart = () => (
  <Plot viewBox="0 0 728 656" role="img" aria-label="日K">
    <text x="364" y="362" textAnchor="middle" fontSize="92" fontWeight="900" fill="#f7f7f7">东方财富</text>
    <rect x="1" y="1" width="726" height="654" fill="none" stroke="#e4e4e4" strokeWidth="2" />
    {[165, 329, 493].map((y) => (
      <path key={y} d={`M1 ${y}H727`} stroke="#e2e2e2" strokeWidth="1.500" strokeDasharray="2 1" />
    ))}
    {candles.map((c, i) => (
      <CandleMark key={i} index={i} data={c} />
    ))}
    {priceLines.map((l) => (
      <polyline key={l.stroke} points={toPoints(l.points)} fill="none" stroke={l.stroke} strokeWidth="2.600" strokeLinejoin="round" />
    ))}
    {signals.map(([i, top, n]) => (
      <g key={i} textAnchor="middle" fontSize="29">
        <rect x={cx(i) - 12} y={top} width="24" height="44" rx="3" fill={n === 9 ? "#e04618" : "#fa6a28"} fillOpacity={n === 9 ? 1 : 0.26} />
        <text x={cx(i)} y={top + 33} fill={n === 9 ? "#fff" : "#f2600e"}>{n}</text>
      </g>
    ))}
    {priceLabels.map(([label, y]) => (
      <text key={label} x="3" y={y} fontSize="33" fill={color.faint}>{label}</text>
    ))}
  </Plot>
);

const VolumeChart = () => (
  <Plot viewBox="0 0 728 258" role="img" aria-label="成交量">
    <rect x="1" y="1" width="726" height="256" fill="none" stroke="#e4e4e4" strokeWidth="2" />
    {volumes.map((top, i) =>
      volumeUp.has(i) ? (
        <rect key={i} x={cx(i) - 5} y={top} width="11" height={257 - top} fill="#fff" stroke={color.candleUp} strokeWidth="2" />
      ) : (
        <rect key={i} x={cx(i) - 5} y={top} width="11" height={258 - top} fill={color.candleDown} />
      )
    )}
    {volumeLines.map((l) => (
      <polyline key={l.stroke} points={toPoints(l.points)} fill="none" stroke={l.stroke} strokeWidth="2.600" strokeLinejoin="round" />
    ))}
    <text x="2" y="44" fontSize="32" fill={color.faint}>20.30万</text>
  </Plot>
);

const ChipChart = () => (
  <Plot viewBox="0 0 297 656" role="img" aria-label="筹码分布">
    <rect x="0.500" y="1" width="296" height="654" fill="none" stroke="#cccccc" strokeWidth="1.500" />
    {chipBars.map((v, i) => (
      <rect key={i} x="0" y={i * 5.91} width={(v / chipMax) * 297} height="2.400" fill={i === chipBars.length - 1 ? "#e04848" : "#6db35c"} />
    ))}
  </Plot>
);

/* ---------- content ---------- */

const averages = [
  { text: "MA5:13.60", tone: "#222222" },
  { text: "10:13.83", tone: "#f0bd55" },
  { text: "20:13.91", tone: "#bf1f7c" },
  { text: "60:14.34", tone: "#666666" },
  { text: "120:14.59", tone: "#2338a0" },
  { text: "250:14.93", tone: "#78b8e6" },
];

const navItems = [
  { label: "交易", icon: <TradeIcon /> },
  { label: "发帖", icon: <PostIcon /> },
  { label: "功能", icon: <FeatureIcon /> },
  { label: "设自选", icon: <WatchIcon /> },
];

export default function App() {
  return (
    <Page>
      <GlobalStyle />
      <Main>
        <StatusBar>
          <StatusGroup>
            <Clock>6:20</Clock>
            <AppGlyph />
            <MoreDots />
          </StatusGroup>
          <StatusGroup>
            <BellOff />
            <Signal />
            <Wifi />
            <Battery />
          </StatusGroup>
        </StatusBar>

        <TitleBar>
          <TitleSide>
            <button aria-label="返回"><Back /></button>
            <AppLogo>
              <span>东方</span>
              <span>财富</span>
            </AppLogo>
          </TitleSide>
          <TitleText>
            <StockName>
              派瑞股份<CompanyBadge>企</CompanyBadge>
            </StockName>
            <StockCode>
              300831<LevelTag>L1</LevelTag>
              <Caret $size={9} $color="#cccccc" />
            </StockCode>
          </TitleText>
          <TitleSide $end>
            <button aria-label="AI"><AiIcon /></button>
            <button aria-label="分享"><Share /></button>
            <button aria-label="搜索"><Search /></button>
          </TitleSide>
        </TitleBar>

        <Banner>
          <span>板块强弱一目了然，投资先机一触即发！快来体验！</span>
          <button aria-label="关闭"><Cross size={29} stroke={color.orange} /></button>
        </Banner>

        <QuotePanel>
          <PriceBlock>
            <LastPrice>12.96</LastPrice>
            <Changes><span>-4.50%</span><span>-0.61</span></Changes>
          </PriceBlock>
          <Metric><MetricLabel>今开</MetricLabel><MetricValue $tone="down">13.50</MetricValue></Metric>
          <Metric><MetricLabel>最高</MetricLabel><MetricValue $tone="up">13.61</MetricValue></Metric>
          <Metric><MetricLabel>最低</MetricLabel><MetricValue $tone="down">12.91</MetricValue></Metric>
          <Metric><MetricLabel>换手<DotsInfo /></MetricLabel><MetricValue>3.20%</MetricValue></Metric>
          <Metric><MetricLabel>总手</MetricLabel><MetricValue $size={38}>59036</MetricValue></Metric>
          <Metric><MetricLabel>金额</MetricLabel><MetricValue>7762万</MetricValue></Metric>
          <Metric><MetricLabel>总值<DotsInfo /></MetricLabel><MetricValue $size={35}>41.47亿</MetricValue></Metric>
          <Metric><MetricLabel>流值</MetricLabel><MetricValue $size={35}>23.91亿</MetricValue></Metric>
          <Metric><MetricLabel>市盈<SmallSup>动</SmallSup><DotsInfo /></MetricLabel><MetricValue>154.67</MetricValue></Metric>
          <MoreButton>更多</MoreButton>
        </QuotePanel>

        <AfterHours>
          <AfterItem $width={371}>盘后固定价格:<AfterValue $green>12.96</AfterValue></AfterItem>
          <AfterItem $width={172}>量:<AfterValue>--</AfterValue></AfterItem>
          <AfterItem $width={172}>额:<AfterValue>--</AfterValue></AfterItem>
          <SwitchLabel>
            盘后分时
            <Switch type="checkbox" role="switch" defaultChecked />
          </SwitchLabel>
          <button aria-label="展开">
            <Chevron w={26} h={16} d="M1 1 13 14 25 1" stroke="#888" width={2} />
          </button>
        </AfterHours>

        <Notice>
          <Speaker />
          <span>自选分析：触发重点关注信号，立即点击查看</span>
          <Push><button aria-label="关闭"><Cross size={25} stroke="#999" /></button></Push>
        </Notice>

        <Tabs $columns="repeat(5, 162fr) 182fr 68fr 20fr" $inset={0}>
          <Tab>分时</Tab>
          <Tab>五日</Tab>
          <Tab $active>日K</Tab>
          <Tab>周K</Tab>
          <Tab>月K</Tab>
          <Tab>更多<Caret $size={6} /></Tab>
          <Tab aria-label="设置"><Gear /></Tab>
        </Tabs>

        <IndicatorBar>
          <Chip>均线<Caret $size={6} /></Chip>
          <Averages>
            {averages.map((a) => (
              <Average key={a.text} $color={a.tone}>{a.text}<Trend /></Average>
            ))}
          </Averages>
          <ChipGroup>
            <Chip>DK点<Corner /></Chip>
            <Chip>前复权</Chip>
          </ChipGroup>
        </IndicatorBar>

        <ChartArea>
          <ChartColumn>
            <Stage>
              <CandleChart />
              <FloatButton $left="26px" aria-label="快进">
                <Chevron w={28} h={30} d="M3 2 16 15 3 28M13 2 26 15 13 28" stroke={color.orange} width={2.6} />
              </FloatButton>
              <FloatButton $left="181px" aria-label="全屏">
                <Chevron w={30} h={30} d="M2 14V2H14M2 2 13 13M28 16V28H16M28 28 17 17" stroke={color.orange} width={3} />
              </FloatButton>
            </Stage>
            <VolumeHead>
              <Chip $gap={10}>成交量<Caret $size={6} /></Chip>
              <VolumeFigures>
                <Figure $color="#222222">59036<Trend up /></Figure>
                <Figure $color="#eebf2c">MA1:39642<Trend up /></Figure>
                <Figure $color="#c33ac6">MA2:40612<Trend /></Figure>
                <Figure $color="#168a1c">MA3:54889<Trend up /></Figure>
              </VolumeFigures>
              <SideToggle aria-label="收起">
                <Chevron w={16} h={26} d="M3 2 13 13 3 24" stroke="#fff" width={4} />
              </SideToggle>
            </VolumeHead>
            <VolumeChart />
            <Dates><span>20250822</span><span>20251121</span></Dates>
          </ChartColumn>

          <ChipColumn>
            <ChipChart />
            <Legend>
              <LegendItem $color="#5cb848">套牢</LegendItem>
              <LegendItem $color="#e84b4b">获利</LegendItem>
            </Legend>
            <ChipRow><ChipLabel>获利比例</ChipLabel><ChipValue>0.02%</ChipValue></ChipRow>
            <ChipRow><ChipLabel>平均成本</ChipLabel><ChipValue>14.26</ChipValue></ChipRow>
            <Segmented>
              <Segment $active>90%筹码</Segment>
              <Segment>70%筹码</Segment>
            </Segmented>
            <ChipRow><ChipLabel>价格区间</ChipLabel><ChipValue>13.63-15.73</ChipValue></ChipRow>
            <ChipRow><ChipLabel>集中度</ChipLabel><ChipValue>7.15%</ChipValue></ChipRow>
            <ChipRow><ChipLabel>说明<InfoDot>i</InfoDot></ChipLabel><ChipValue>2025-11-21</ChipValue></ChipRow>
          </ChipColumn>
        </ChartArea>

        <Promo>
          <Megaphone />
          <PromoLink href="#level2">好礼3选1！最多换5个月Level-2，点击进入&gt;</PromoLink>
          <PromoClose aria-label="关闭"><Cross size={30} stroke={color.orange} /></PromoClose>
        </Promo>
        <Rule />

        <Tabs $columns="repeat(7, 1fr)" $inset={33}>
          <Tab $active>股吧</Tab>
          <Tab>盘口</Tab>
          <Tab>资讯</Tab>
          <Tab>公告</Tab>
          <Tab>研报</Tab>
          <Tab>财务</Tab>
          <Tab>资料</Tab>
        </Tabs>

        <Cards>
          <Card href="#rank">
            <CardArt width="245" height="220" viewBox="0 0 245 220">
              <path d="M48 0H245V220H0V28H48z" fill="#fdf0ee" opacity="0.700" />
              <path d="M127 20H215V220H37V72H127z" fill="#fff8f6" opacity="0.700" />
              <path d="M147 47H222V220H100V88H147z" fill="#fce6e4" />
            </CardArt>
            <RankIcon />
            <CardTitle>
              人气榜
              <Chevron w={12} h={22} d="M1 1 10 11 1 21" stroke="#aaa" width={2} />
            </CardTitle>
          </Card>
          <Card href="#versus">
            <CardArt width="230" height="220" viewBox="0 0 230 220">
              <path d="M0 0H230V220H12z" fill="#fdeceb" opacity="0.700" />
              <text x="30" y="144" fontSize="150" fontWeight="900" fontStyle="italic" fill="#fce5e3" stroke="#fff5f3" strokeWidth="12" paintOrder="stroke" fontFamily="Inter, sans-serif">VS</text>
            </CardArt>
            <VersusIcon />
            <CardTitle>多空看盘</CardTitle>
          </Card>
        </Cards>
      </Main>

      <BottomBar>
        <IndexButton>
          <UpCaret />
          <IndexPrice>3834.89</IndexPrice>
          <IndexRow><IndexName>上证</IndexName>-2.45%</IndexRow>
        </IndexButton>
        {navItems.map((item) => (
          <NavButton key={item.label}>{item.icon}{item.label}</NavButton>
        ))}
      </BottomBar>
      <HomeArea><HomeIndicator /></HomeArea>
    </Page>
  );
}
